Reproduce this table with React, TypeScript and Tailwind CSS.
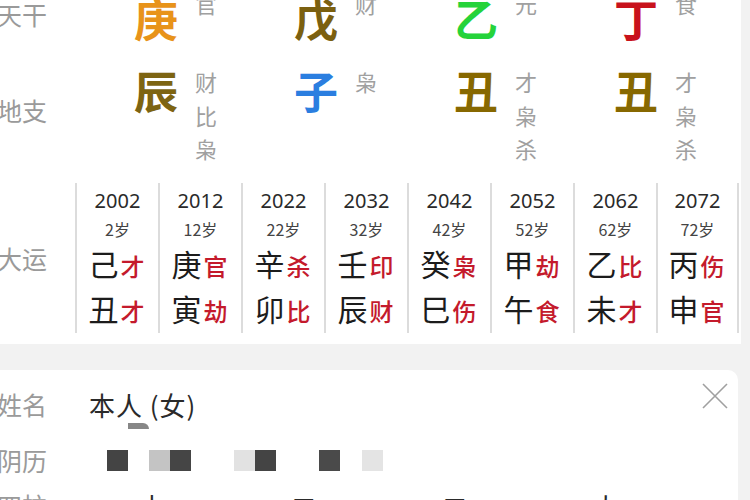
import React from "react";

const pillars = [
  { stem: "庚", stemColor: "text-[#e8931a]", stemGod: ["官"], branch: "辰", branchColor: "text-[#7d6412]", branchGods: ["财", "比", "枭"] },
  { stem: "戊", stemColor: "text-[#7b6010]", stemGod: ["财"], branch: "子", branchColor: "text-[#2b7ee0]", branchGods: ["枭"] },
  { stem: "乙", stemColor: "text-[#25d33a]", stemGod: ["元"], branch: "丑", branchColor: "text-[#876800]", branchGods: ["才", "枭", "杀"] },
  { stem: "丁", stemColor: "text-[#c8121c]", stemGod: ["食"], branch: "丑", branchColor: "text-[#876800]", branchGods: ["才", "枭", "杀"] },
];

const dayun = [
  { year: "2002", age: "2岁", s: "己", sg: "才", b: "丑", bg: "才" },
  { year: "2012", age: "12岁", s: "庚", sg: "官", b: "寅", bg: "劫" },
  { year: "2022", age: "22岁", s: "辛", sg: "杀", b: "卯", bg: "比" },
  { year: "2032", age: "32岁", s: "壬", sg: "印", b: "辰", bg: "财" },
  { year: "2042", age: "42岁", s: "癸", sg: "枭", b: "巳", bg: "伤" },
  { year: "2052", age: "52岁", s: "甲", sg: "劫", b: "午", bg: "食" },
  { year: "2062", age: "62岁", s: "乙", sg: "比", b: "未", bg: "才" },
  { year: "2072", age: "72岁", s: "丙", sg: "伤", b: "申", bg: "官" },
];

export default function App() {
  return (
    <div className="w-[750px] h-[500px] overflow-hidden bg-[#f2f2f2] font-['Noto_Sans_CJK_SC','Noto_Sans',sans-serif]">
      {/* Card 1 */}
      <div className="w-[741px] h-[344px] bg-white overflow-hidden flex flex-col">
        {/* 天干 row */}
        <div className="flex items-start h-[72px] mt-[-4px] shrink-0">
          <div className="w-[134px] shrink-0 pt-[6px]">
            <div className="-ml-[3px] text-[25px] leading-none text-[#9a9a9a]">天干</div>
          </div>
          {pillars.map((p, i) => (
            <div key={i} className="w-[160px] shrink-0 flex items-start">
              <div className={`w-[44px] text-[44px] leading-none font-bold ${p.stemColor}`}>{p.stem}</div>
              <div className="ml-[17px] mt-[-9px] flex flex-col text-[22px] leading-[33.5px] text-[#a0a0a0]">
                {p.stemGod.map((g, j) => (
                  <span key={j}>{g}</span>
                ))}
              </div>
            </div>
          ))}
        </div>
        {/* 地支 row */}
        <div className="flex items-start h-[115px] shrink-0">
          <div className="w-[134px] shrink-0 pt-[30px]">
            <div className="-ml-[3px] text-[25px] leading-none text-[#9a9a9a]">地支</div>
          </div>
          {pillars.map((p, i) => (
            <div key={i} className="w-[160px] shrink-0 flex items-start">
              <div className={`w-[44px] text-[44px] leading-none font-bold ${p.branchColor}`}>{p.branch}</div>
              <div className="ml-[17px] mt-[-3px] flex flex-col text-[22px] leading-[33.5px] text-[#a0a0a0]">
                {p.branchGods.map((g, j) => (
                  <span key={j}>{g}</span>
                ))}
              </div>
            </div>
          ))}
        </div>
        {/* 大运 */}
        <div className="flex items-start h-[150px] shrink-0">
          <div className="w-[75px] shrink-0 pt-[63px]">
            <div className="-ml-[3px] text-[25px] leading-none text-[#9a9a9a]">大运</div>
          </div>
          <div className="flex h-full">
            {dayun.map((d, i) => (
              <div
                key={i}
                className={`w-[83px] h-full border-l-2 border-[#dcdcdc] flex flex-col items-center ${i === dayun.length - 1 ? "border-r-2" : ""}`}
              >
                <div className="mt-[8px] text-[20px] leading-none text-[#2a2a2a] font-['Noto_Sans',sans-serif]">{d.year}</div>
                <div className="mt-[10px] text-[16px] leading-none text-[#444]">{d.age}</div>
                <div className="mt-[11px] flex items-end pr-[2px]">
                  <span className="text-[30px] leading-none text-[#1c1c1c]">{d.s}</span>
                  <span className="ml-[2px] text-[24px] leading-none font-medium text-[#c41a2c]">{d.sg}</span>
                </div>
                <div className="mt-[15px] flex items-end pr-[2px]">
                  <span className="text-[30px] leading-none text-[#1c1c1c]">{d.b}</span>
                  <span className="ml-[2px] text-[24px] leading-none font-medium text-[#c41a2c]">{d.bg}</span>
                </div>
              </div>
            ))}
          </div>
        </div>
      </div>

      {/* Card 2 */}
      <div className="mt-[26px] w-[738px] h-[200px] bg-white rounded-tr-[10px] flex flex-col">
        <div className="flex items-start h-[57px] pt-[22px] relative shrink-0">
          <div className="w-[89px] shrink-0">
            <div className="-ml-[3px] text-[25px] leading-none text-[#9a9a9a]">姓名</div>
          </div>
          <div className="relative text-[26px] leading-none text-[#2a2a2a] tracking-[1px]">
            本人 (女)
            <div className="absolute left-[39px] top-[31px] w-[21px] h-[6px] bg-[#7a7a7a] rounded-tr-[6px] opacity-90" />
          </div>
          <svg className="absolute right-[10px] top-[13px]" width="26" height="26" viewBox="0 0 26 26">
            <path d="M1 1 L25 25 M25 1 L1 25" stroke="#a0a0a0" strokeWidth="1.6" fill="none" />
          </svg>
        </div>
        <div className="flex items-center h-[66px] shrink-0">
          <div className="w-[107px] shrink-0">
            <div className="-ml-[3px] text-[25px] leading-none text-[#9a9a9a]">阴历</div>
          </div>
          <div className="flex items-center h-[21px]">
            <div className="w-[21px] h-[21px] bg-[#444]" />
            <div className="ml-[21px] w-[21px] h-[21px] bg-[#c4c4c4]" />
            <div className="w-[21px] h-[21px] bg-[#454545]" />
            <div className="ml-[43px] w-[21px] h-[21px] bg-[#e2e2e2]" />
            <div className="w-[21px] h-[21px] bg-[#444]" />
            <div className="ml-[43px] w-[21px] h-[21px] bg-[#4a4a4a]" />
            <div className="ml-[22px] w-[21px] h-[21px] bg-[#e4e4e4]" />
          </div>
        </div>
        <div className="flex items-start shrink-0">
          <div className="w-[134px] shrink-0">
            <div className="-ml-[3px] text-[25px] leading-none text-[#9a9a9a]">四柱</div>
          </div>
          <div className="w-[160px] text-[26px] leading-none text-[#2a2a2a]">&nbsp;上</div>
          <div className="w-[160px] text-[26px] leading-none text-[#2a2a2a]">&nbsp;二</div>
          <div className="w-[160px] text-[26px] leading-none text-[#2a2a2a]">&nbsp;二</div>
          <div className="w-[160px] text-[26px] leading-none text-[#2a2a2a]">&nbsp;火</div>
        </div>
      </div>
    </div>
  );
}
